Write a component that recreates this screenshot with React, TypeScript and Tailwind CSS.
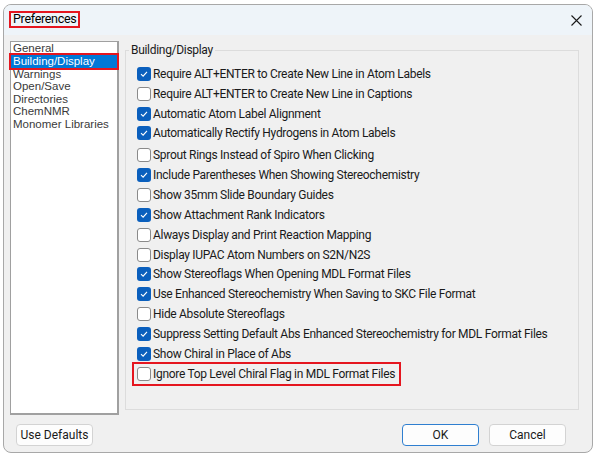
import React from "react";

const options: { label: string; checked: boolean; gapBefore?: boolean; marked?: boolean }[] = [
  { label: "Require ALT+ENTER to Create New Line in Atom Labels", checked: true },
  { label: "Require ALT+ENTER to Create New Line in Captions", checked: false },
  { label: "Automatic Atom Label Alignment", checked: true },
  { label: "Automatically Rectify Hydrogens in Atom Labels", checked: true },
  { label: "Sprout Rings Instead of Spiro When Clicking", checked: false, gapBefore: true },
  { label: "Include Parentheses When Showing Stereochemistry", checked: true },
  { label: "Show 35mm Slide Boundary Guides", checked: false },
  { label: "Show Attachment Rank Indicators", checked: true },
  { label: "Always Display and Print Reaction Mapping", checked: false },
  { label: "Display IUPAC Atom Numbers on S2N/N2S", checked: false },
  { label: "Show Stereoflags When Opening MDL Format Files", checked: true },
  { label: "Use Enhanced Stereochemistry When Saving to SKC File Format", checked: true },
  { label: "Hide Absolute Stereoflags", checked: false },
  { label: "Suppress Setting Default Abs Enhanced Stereochemistry for MDL Format Files", checked: true },
  { label: "Show Chiral in Place of Abs", checked: true },
  { label: "Ignore Top Level Chiral Flag in MDL Format Files", checked: false, marked: true },
];

const pages = [
  "General",
  "Building/Display",
  "Warnings",
  "Open/Save",
  "Directories",
  "ChemNMR",
  "Monomer Libraries",
];

function CheckBox({ checked }: { checked: boolean }) {
  if (checked) {
    return (
      <span className="w-[14px] h-[14px] rounded-[3px] bg-[#0a5fbd] flex items-center justify-center shrink-0">
        <svg width="10" height="10" viewBox="0 0 10 10">
          <path d="M2 5.2 L4.1 7.2 L8 2.8" fill="none" stroke="#ffffff" strokeWidth="1.1" />
        </svg>
      </span>
    );
  }
  return (
    <span className="w-[14px] h-[14px] rounded-[3px] bg-white border border-[#8a8a8a] shrink-0" />
  );
}

function OptionRow({ label, checked }: { label: string; checked: boolean }) {
  return (
    <div className="h-[19.85px] flex items-center gap-[2px]">
      <CheckBox checked={checked} />
      <span className="whitespace-nowrap">{label}</span>
    </div>
  );
}

function DialogButton({ label, primary }: { label: string; primary?: boolean }) {
  return (
    <button
      className={`w-[77px] h-[22px] rounded-[4px] bg-[#fdfdfd] text-[12px] text-[#1a1a1a] leading-none ${
        primary ? "border border-[#2f7fd0]" : "border border-[#d3d3d3]"
      }`}
    >
      {label}
    </button>
  );
}

export default function App() {
  return (
    <div
      className="w-[596px] h-[455px] bg-white pt-[4px] pl-[3px]"
      style={{ fontFamily: 'Roboto, "Noto Sans", sans-serif' }}
    >
      <div className="w-[590px] h-[449px] rounded-[8px] border border-[#a8a8a8] bg-[#f0f0f0] overflow-hidden flex flex-col">
        {/* Title bar */}
        <div className="h-[30px] bg-[#eef4f9] flex items-center justify-between shrink-0">
          <div className="ml-[5px] mt-[-2px] border-2 border-[#e5161f] h-[17px] pl-[2px] pr-[2px] flex items-center text-[12.5px] tracking-[-0.3px] text-black">
            Preferences
          </div>
          <svg width="11" height="11" viewBox="0 0 11 11" className="mr-[10px]">
            <path d="M0.5 0.5 L10.5 10.5 M10.5 0.5 L0.5 10.5" stroke="#1a1a1a" strokeWidth="1.1" />
          </svg>
        </div>

        {/* Body */}
        <div className="flex items-start pl-[6px] pt-[6px]">
          <div
            className="w-[109px] h-[374px] bg-white border border-[#a0a0a0] border-b-2 border-r-2 text-[11.5px] text-[#3a3a3a]"
            style={{ fontFamily: '"Liberation Sans", Arial, sans-serif' }}
          >
            {pages.map((p) =>
              p === "Building/Display" ? (
                <div
                  key={p}
                  className="h-[13px] bg-[#0078d7] text-white outline-2 outline-[#e5161f] leading-[13px] pl-[2px]"
                >
                  {p}
                </div>
              ) : (
                <div key={p} className="h-[12.6px] leading-[12.6px] pl-[2px]">
                  {p}
                </div>
              )
            )}
          </div>

          <fieldset className="ml-[6px] w-[454px] h-[369px] border border-[#dcdcdc] pl-[11px] pt-[5px] text-[12px] tracking-[-0.3px] text-[#1a1a1a]">
            <legend className="ml-[-8px] px-[2px] leading-[18px] text-[12px] text-[#1a1a1a]">
              Building/Display
            </legend>
            {options.map((o) =>
              o.marked ? (
                <div
                  key={o.label}
                  className="-ml-[5px] my-[-2px] w-fit border-2 border-[#e5161f] pl-[3px] pr-[4px]"
                >
                  <OptionRow label={o.label} checked={o.checked} />
                </div>
              ) : (
                <div key={o.label} className={o.gapBefore ? "mt-[2px]" : ""}>
                  <OptionRow label={o.label} checked={o.checked} />
                </div>
              )
            )}
          </fieldset>
        </div>

        {/* Footer */}
        <div className="flex items-center mt-[9px] pl-[12px] pr-[26px]">
          <DialogButton label="Use Defaults" />
          <div className="flex-1" />
          <DialogButton label="OK" primary />
          <div className="w-[10px]" />
          <DialogButton label="Cancel" />
        </div>
      </div>
    </div>
  );
}
